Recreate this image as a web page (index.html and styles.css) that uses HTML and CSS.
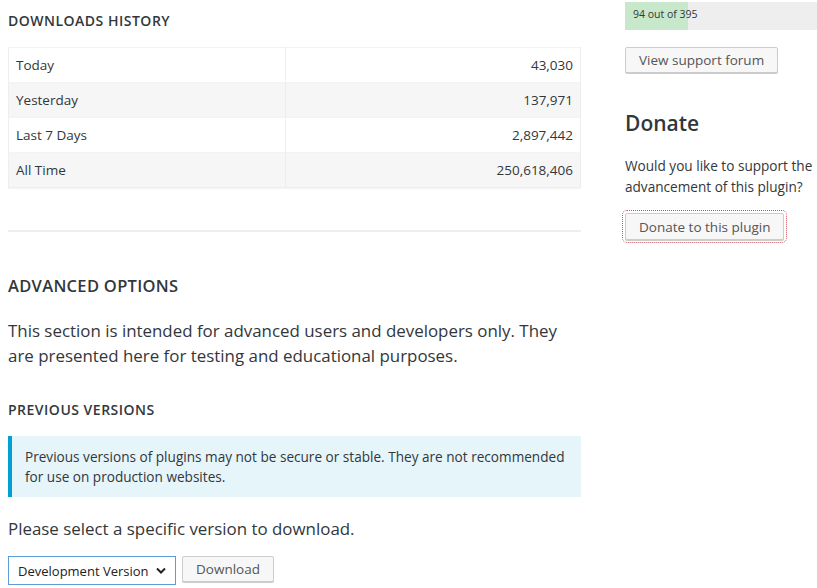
FILE: index.html
```
<!DOCTYPE html>
<html lang="en">
<head>
    <meta charset="UTF-8">
    <title>Plugin Advanced View</title>
    <link rel="stylesheet" href="styles.css">
</head>
<body>
    <div class="page">
        <div class="main">
            <h3 class="section-title">Downloads History</h3>
            <table class="stats">
                <tr><td>Today</td><td class="num">43,030</td></tr>
                <tr class="alt"><td>Yesterday</td><td class="num">137,971</td></tr>
                <tr><td>Last 7 Days</td><td class="num">2,897,442</td></tr>
                <tr class="alt"><td>All Time</td><td class="num">250,618,406</td></tr>
            </table>

            <hr class="divider">

            <h2 class="big-title">Advanced Options</h2>
            <p class="lead">This section is intended for advanced users and developers only. They are presented here for testing and educational purposes.</p>

            <h3 class="section-title">Previous Versions</h3>
            <div class="notice">
                <p>Previous versions of plugins may not be secure or stable. They are not recommended for use on production websites.</p>
            </div>

            <p class="lead lead-tight">Please select a specific version to download.</p>
            <div class="download-row">
                <div class="select">
                    <span>Development Version</span>
                    <svg width="10" height="7" viewBox="0 0 10 7"><path d="M1 1.5 L5 5.5 L9 1.5" fill="none" stroke="#222" stroke-width="2"/></svg>
                </div>
                <button class="btn">Download</button>
            </div>
        </div>

        <div class="side">
            <div class="progress">
                <div class="progress-fill" style="width: 23.8%"></div>
                <span class="progress-label">94 out of 395</span>
            </div>
            <button class="btn">View support forum</button>

            <h2 class="side-title">Donate</h2>
            <p class="side-text">Would you like to support the advancement of this plugin?</p>
            <button class="btn btn-focus">Donate to this plugin</button>
        </div>
    </div>
</body>
</html>
```

FILE: styles.css
```
html, body {
    margin: 0;
    overflow: hidden;
}

body {
    font-family: 'Open Sans', sans-serif;
    color: #32373c;
    background-color: #fff;
}

.page {
    display: flex;
    gap: 44px;
    padding: 0 0 0 8px;
}

.main {
    width: 573px;
    flex-shrink: 0;
}

.side {
    flex: 1;
    min-width: 0;
    overflow: hidden;
    padding: 2px 0 4px 4px;
    margin-left: -4px;
}

.section-title {
    font-size: 14px;
    font-weight: 600;
    text-transform: uppercase;
    letter-spacing: 0.5px;
    margin: 11px 0 16px;
    line-height: 20px;
}

.stats {
    width: 100%;
    border-collapse: collapse;
    border: 1px solid #eee;
    box-shadow: 0 1px 1px rgba(0, 0, 0, 0.04);
    font-size: 13.5px;
}

.stats td {
    height: 34px;
    padding: 0 7px;
    border-right: 1px solid #eee;
    border-top: 1px solid #f3f3f3;
}

.stats td:first-child {
    width: 262px;
}

.stats tr.alt td {
    background-color: #f6f6f6;
}

.stats .num {
    text-align: right;
}

.divider {
    border: 0;
    border-top: 2px solid #eee;
    margin: 42px 0 43px;
}

.big-title {
    font-size: 16.5px;
    font-weight: 600;
    text-transform: uppercase;
    letter-spacing: 0.3px;
    margin: 0 0 21px;
    line-height: 22px;
}

.lead {
    font-size: 16.9px;
    line-height: 25px;
    margin: 0 0 32px;
}

.lead-tight {
    margin-bottom: 15px;
}

.notice {
    background-color: #e5f5fa;
    border-left: 4px solid #00a0d2;
    padding: 11px 4px 10px 13px;
    margin: 0 0 19px;
}

.notice p {
    margin: 0;
    font-size: 13.6px;
    line-height: 20px;
}

.download-row {
    display: flex;
    gap: 6px;
    align-items: flex-start;
}

.select {
    display: flex;
    align-items: center;
    justify-content: space-between;
    box-sizing: border-box;
    width: 168px;
    height: 29px;
    padding: 0 9px 0 9px;
    border: 1px solid #5b9dd9;
    font-size: 13px;
    color: #222;
}

.btn {
    font-family: 'Open Sans', sans-serif;
    font-size: 13.5px;
    color: #555;
    background-color: #f7f7f7;
    border: 1px solid #ccc;
    border-radius: 2px;
    box-shadow: 0 1px 0 #ccc;
    height: 26px;
    padding: 0 13px;
    line-height: 24px;
    cursor: pointer;
}

.progress {
    position: relative;
    width: 265px;
    height: 28px;
    background-color: #eee;
    margin-bottom: 17px;
}

.progress-fill {
    height: 100%;
    background-color: #c7e8ca;
}

.progress-label {
    position: absolute;
    left: 8px;
    top: 5px;
    font-size: 10.5px;
    color: #32373c;
}

.side-title {
    font-size: 21px;
    font-weight: 600;
    margin: 36px 0 18px;
    line-height: 28px;
}

.side-text {
    font-size: 13.6px;
    line-height: 21px;
    margin: 0 0 16px;
}

.btn-focus {
    height: 27px;
    outline: 1px dotted #c9505a;
    outline-offset: 2px;
}
```
